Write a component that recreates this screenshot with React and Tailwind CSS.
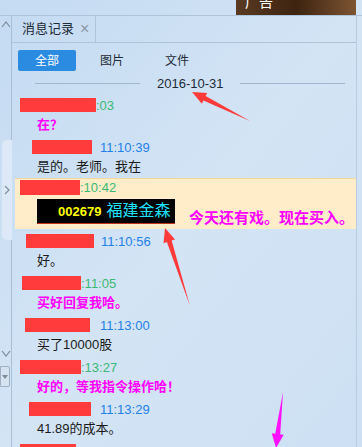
const GREEN = "text-[#3bb873]";
const BLUE = "text-[#1f80e8]";

const messages = [
  { nameX: 8, nameW: 76, time: ":03", timeColor: GREEN, text: "在？", magenta: true },
  { nameX: 20, nameW: 60, time: "11:10:39", timeColor: BLUE, gap: 8, text: "是的。老师。我在" },
];

const messages2 = [
  { nameX: 14, nameW: 68, time: "11:10:56", timeColor: BLUE, gap: 7, text: "好。" },
  { nameX: 10, nameW: 59, time: ":11:05", timeColor: GREEN, text: "买好回复我哈。", magenta: true },
  { nameX: 13, nameW: 65, time: "11:13:00", timeColor: BLUE, gap: 10, text: "买了10000股" },
  { nameX: 8, nameW: 61, time: ":13:27", timeColor: GREEN, text: "好的，等我指令操作哈！", magenta: true },
  { nameX: 17, nameW: 62, time: "11:13:29", timeColor: BLUE, gap: 9, text: "41.89的成本。" },
  { nameX: 8, nameW: 56, time: ":13:40", timeColor: GREEN, text: "", magenta: false },
];

function Message({ m }) {
  return (
    <div className="h-[42px] shrink-0 flex flex-col">
      <div className="h-[18px] shrink-0 flex items-center" style={{ paddingLeft: m.nameX }}>
        <div className="h-[14px] bg-[#ff3b3b]" style={{ width: m.nameW }} />
        <span className={`text-[13px] leading-none font-['Liberation_Sans',sans-serif] ${m.timeColor}`} style={{ marginLeft: m.gap || 0 }}>
          {m.time}
        </span>
      </div>
      <div
        className={`h-[20px] shrink-0 pl-[25px] flex items-center text-[13px] leading-none whitespace-nowrap font-['Liberation_Sans','Noto_Sans_CJK_SC',sans-serif] ${
          m.magenta ? "text-[#ff00ff] font-bold" : "text-[#1a1a1a]"
        }`}
      >
        {m.text}
      </div>
    </div>
  );
}

function Arrow({ x1, y1, x2, y2, color }) {
  // thin tapering arrow, head at (x2,y2)
  const dx = x2 - x1;
  const dy = y2 - y1;
  const len = Math.hypot(dx, dy);
  const ux = dx / len;
  const uy = dy / len;
  const px = -uy;
  const py = ux;
  const hb = 14;
  const bx = x2 - ux * hb;
  const by = y2 - uy * hb;
  const pts = [
    [x1, y1],
    [bx + px * 2.5, by + py * 2.5],
    [bx + px * 6, by + py * 6],
    [x2, y2],
    [bx - px * 6, by - py * 6],
    [bx - px * 2.5, by - py * 2.5],
  ]
    .map((p) => p.join(","))
    .join(" ");
  return <polygon points={pts} fill={color} />;
}

export default function App() {
  return (
    <div className="relative w-[362px] h-[447px] overflow-hidden bg-gradient-to-br from-[#c4dbf2] via-[#d3e4f5] to-[#cde0f3] font-['Liberation_Sans','Noto_Sans_CJK_SC',sans-serif]">
      {/* top strip with ad */}
      <div className="h-[16px] flex border-b border-[#aec4da]">
        <div className="ml-auto mr-[6px] w-[120px] h-[15px] bg-gradient-to-r from-[#5a3a22] via-[#3e2410] to-[#7d5533] relative overflow-hidden">
          <span className="absolute left-[9px] top-[-7px] text-white text-[14px] leading-[18px]">广告</span>
        </div>
      </div>

      <div className="flex h-[431px]">
        {/* left strip */}
        <div className="w-[12px] shrink-0 border-r border-[#a9bfd6] flex flex-col items-center text-[#7d8a98]">
          <svg width="10" height="8" viewBox="0 0 10 8" className="mt-[4px] ml-[1px] shrink-0">
            <path d="M1 7 L5 2 L9 7" stroke="#7d8a98" strokeWidth="1.2" fill="none" />
          </svg>
          <div className="mt-[112px] ml-[2px] w-[10px] h-[100px] shrink-0 rounded-l-[5px] bg-[#dde9f6] flex items-center justify-center">
            <svg width="6" height="10" viewBox="0 0 6 10">
              <path d="M1 1 L5 5 L1 9" stroke="#8090a0" strokeWidth="1.2" fill="none" />
            </svg>
          </div>
          <svg width="10" height="7" viewBox="0 0 10 7" className="mt-[110px] shrink-0">
            <path d="M1 1 L5 6 L9 1" stroke="#7d8a98" strokeWidth="1.2" fill="none" />
          </svg>
          <div className="mt-[9px] mr-[2px] w-[10px] h-[21px] shrink-0 border border-[#9eb0c2] rounded-r-[2px] bg-[#d5e2ef] flex items-center justify-center">
            <svg width="6" height="4" viewBox="0 0 6 4">
              <path d="M0 0 L6 0 L3 4 Z" fill="#7d8a98" />
            </svg>
          </div>
        </div>

        {/* main panel */}
        <div className="w-[345px] shrink-0 border-r border-[#b8cde2] flex flex-col">
          <div className="h-[27px] shrink-0 border-b border-[#aec4da] flex">
            <div className="w-[84px] border-r border-[#aec4da] flex items-center pl-[10px] text-[13px] text-[#1e2a36]">
              消息记录
              <span className="ml-[6px] text-[#8c98a4] text-[16px] leading-none">×</span>
            </div>
          </div>

          <div className="h-[28px] shrink-0 flex items-end pl-[6px] text-[12px] text-[#1e2a36]">
            <div className="w-[58px] h-[21px] rounded-[2px] bg-[#2b8be0] text-white flex items-center justify-center">全部</div>
            <span className="ml-[24px] h-[21px] flex items-center">图片</span>
            <span className="ml-[41px] h-[21px] flex items-center">文件</span>
          </div>

          <div className="h-[25px] shrink-0 flex items-center">
            <div className="ml-[23px] w-[105px] h-px bg-[#9fb8d0]" />
            <span className="ml-[17px] text-[13px] text-[#1e2a36] leading-none">2016-10-31</span>
            <div className="ml-[16px] w-[105px] h-px bg-[#9fb8d0]" />
          </div>

          <div className="flex-1 min-h-0 overflow-hidden flex flex-col">
            {messages.map((m, i) => (
              <Message key={i} m={m} />
            ))}

            <div className="h-[51px] shrink-0 mt-[-2px] ml-[3px] bg-[#ffedc9] border-t border-[#f3d89e] flex flex-col">
              <div className="h-[16px] shrink-0 flex items-center pl-[5px]">
                <div className="w-[60px] h-[15px] bg-[#ff3b3b]" />
                <span className={`text-[13px] leading-none ${GREEN}`}>:10:42</span>
              </div>
              <div className="flex items-end mt-[4px] pl-[22px] whitespace-nowrap">
                <div className="w-[138px] h-[25px] shrink-0 bg-black border-b border-[#c03020] flex items-center pl-[21px]">
                  <span className="text-[#ffff00] font-bold text-[13px] leading-none font-['Liberation_Sans',sans-serif]">002679</span>
                  <span className="ml-[5px] text-[#1fe0ff] text-[16px] leading-none">福建金森</span>
                </div>
                <span className="ml-[14px] mb-[-1px] text-[#ff00ff] font-bold text-[15px] leading-[15px]">今天还有戏。现在买入。</span>
              </div>
            </div>

            <div className="h-[3px] shrink-0" />
            {messages2.map((m, i) => (
              <Message key={i} m={m} />
            ))}
          </div>
        </div>
      </div>

      {/* annotation arrows */}
      <svg className="absolute left-0 top-0 pointer-events-none" width="362" height="447">
        <Arrow x1={250} y1={121} x2={192} y2={92} color="#ff3a3a" />
        <Arrow x1={190} y1={306} x2={165} y2={228} color="#ff3a3a" />
        <Arrow x1={283} y1={392} x2={276} y2={448} color="#ff10ff" />
      </svg>
    </div>
  );
}
